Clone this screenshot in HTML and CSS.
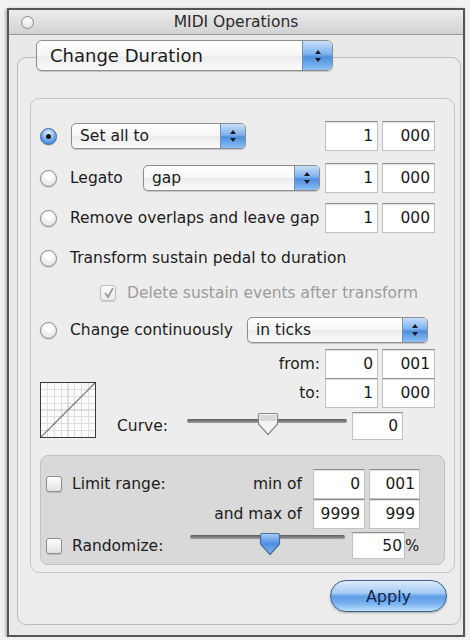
FILE: index.html
```html
<!DOCTYPE html>
<html>
<head>
<meta charset="utf-8">
<link rel="stylesheet" href="styles.css">
</head>
<body>
<div class="window">
  <div class="titlebar">
    <span class="close"></span>
    <span class="title">MIDI Operations</span>
    <span></span>
  </div>
  <div class="content">
    <div class="popup big">
      <span class="ptext">Change Duration</span>
      <span class="stepper"><svg width="8" height="14" viewBox="0 0 8 14"><path d="M4 1 L7 5 L1 5 Z M4 13 L7 9 L1 9 Z" fill="#1a1a1a"/></svg></span>
    </div>
    <div class="group">
      <div class="options">
        <div class="row r1">
          <span class="radio on"></span>
          <div class="popup set"><span class="ptext">Set all to</span><span class="stepper"><svg width="8" height="14" viewBox="0 0 8 14"><path d="M4 1 L7 5 L1 5 Z M4 13 L7 9 L1 9 Z" fill="#1a1a1a"/></svg></span></div>
          <div class="fields"><span class="field">1</span><span class="field">000</span></div>
        </div>
        <div class="row r2">
          <span class="radio"></span>
          <span class="label">Legato</span>
          <div class="popup gap"><span class="ptext">gap</span><span class="stepper"><svg width="8" height="14" viewBox="0 0 8 14"><path d="M4 1 L7 5 L1 5 Z M4 13 L7 9 L1 9 Z" fill="#1a1a1a"/></svg></span></div>
          <div class="fields near"><span class="field">1</span><span class="field">000</span></div>
        </div>
        <div class="row r3">
          <span class="radio"></span>
          <span class="label">Remove overlaps and leave gap</span>
          <div class="fields"><span class="field">1</span><span class="field">000</span></div>
        </div>
        <div class="row r4">
          <span class="radio"></span>
          <span class="label">Transform sustain pedal to duration</span>
        </div>
        <div class="row cbrow">
          <span class="checkbox disabled"><svg width="13" height="13" viewBox="0 0 13 13"><path d="M3 6 L6 10 L11 1" fill="none" stroke="#9a9a9a" stroke-width="1.8"/></svg></span>
          <span class="label dim">Delete sustain events after transform</span>
        </div>
        <div class="row r5">
          <span class="radio"></span>
          <span class="label">Change continuously</span>
          <div class="popup ticks"><span class="ptext">in ticks</span><span class="stepper"><svg width="8" height="14" viewBox="0 0 8 14"><path d="M4 1 L7 5 L1 5 Z M4 13 L7 9 L1 9 Z" fill="#1a1a1a"/></svg></span></div>
        </div>
        <div class="curve-area">
          <div class="graph">
            <svg width="54" height="54" viewBox="0 0 54 54">
              <rect width="54" height="54" fill="#fbfbfb"/>
              <g stroke="#dedede" stroke-width="1">
                <path d="M6.5 0V54M13.5 0V54M20.5 0V54M33.5 0V54M40.5 0V54M47.5 0V54M0 6.5H54M0 13.5H54M0 20.5H54M0 33.5H54M0 40.5H54M0 47.5H54"/>
              </g>
              <g stroke="#c4c4c4" stroke-width="1">
                <path d="M27 0V54M0 27H54"/>
              </g>
              <path d="M0 54 L54 0" stroke="#6a6a6a" stroke-width="1.2"/>
            </svg>
          </div>
          <div class="curve-right">
            <div class="row rng">
              <span class="label rlabel">from:</span>
              <div class="fields"><span class="field">0</span><span class="field">001</span></div>
            </div>
            <div class="row rng">
              <span class="label rlabel">to:</span>
              <div class="fields"><span class="field">1</span><span class="field">000</span></div>
            </div>
            <div class="row curve">
              <span class="label clabel">Curve:</span>
              <div class="slider"><span class="track"></span><span class="knob"><svg width="22" height="24" viewBox="0 0 22 24"><path d="M3 1.5 H19 Q20.5 1.5 20.5 3 V12 L11 22.5 L1.5 12 V3 Q1.5 1.5 3 1.5 Z" fill="#f4f4f4" stroke="#8a8a8a" stroke-width="1.2"/><path d="M3 3 H19 V9 H3 Z" fill="#d9d9d9"/></svg></span></div>
              <span class="field cfield">0</span>
            </div>
          </div>
        </div>
        <div class="limits">
          <div class="lrow l1">
            <span class="checkbox"></span>
            <span class="label">Limit range:</span>
            <span class="label right">min of</span>
            <div class="fields"><span class="field">0</span><span class="field">001</span></div>
          </div>
          <div class="lrow l2">
            <span class="label right">and max of</span>
            <div class="fields"><span class="field">9999</span><span class="field">999</span></div>
          </div>
          <div class="lrow l3">
            <span class="checkbox"></span>
            <span class="label rlab">Randomize:</span>
            <div class="slider rs"><span class="track"></span><span class="knob"><svg width="22" height="24" viewBox="0 0 22 24"><defs><linearGradient id="bk" x1="0" y1="0" x2="0" y2="1"><stop offset="0" stop-color="#a9cdf5"/><stop offset="0.5" stop-color="#4b8fe0"/><stop offset="1" stop-color="#86bdf2"/></linearGradient></defs><path d="M3 1.5 H19 Q20.5 1.5 20.5 3 V12 L11 22.5 L1.5 12 V3 Q1.5 1.5 3 1.5 Z" fill="url(#bk)" stroke="#4a6e9e" stroke-width="1.2"/></svg></span></div>
            <span class="field pfield">50</span><span class="pct">%</span>
          </div>
        </div>
      </div>
      <div class="actions"><button class="apply">Apply</button></div>
    </div>
  </div>
</div>
</body>
</html>
```

FILE: styles.css
```css
html, body {
  margin: 0;
  padding: 0;
  background: #f2f2f2;
}
body {
  font-family: "DejaVu Sans", "Verdana", sans-serif;
  font-size: 15.5px;
  color: #1c1c1c;
}
.window {
  margin: 8px 0 0 7px;
  width: 454px;
  border: 2px solid #555;
  background: #e9e9e9;
  box-shadow: -1px 1px 3px rgba(0,0,0,0.35);
}
.titlebar {
  height: 24px;
  border-bottom: 1px solid #9a9a9a;
  background: linear-gradient(#ececec, #d2d2d2);
  display: grid;
  grid-template-columns: 1fr auto 1fr;
  align-items: center;
}
.close {
  width: 11px;
  height: 11px;
  border-radius: 50%;
  border: 1px solid #8c8c8c;
  background: radial-gradient(circle at 50% 35%, #ffffff, #d8d8d8);
  margin-left: 12px;
}
.title {
  font-size: 15.5px;
  color: #2a2a2a;
}
.content {
  padding: 5px 2px 10px 8px;
}
.popup {
  display: flex;
  align-items: stretch;
  height: 26px;
  box-sizing: border-box;
  border: 1px solid #8e8e8e;
  border-radius: 5px;
  background: linear-gradient(#ffffff, #f6f6f6 50%, #ececec 51%, #fafafa);
  box-shadow: 0 1px 1px rgba(0,0,0,0.18);
  overflow: hidden;
}
.ptext {
  flex: 1;
  display: flex;
  align-items: center;
  padding-left: 8px;
  white-space: nowrap;
}
.stepper {
  width: 24px;
  display: flex;
  align-items: center;
  justify-content: center;
  border-left: 1px solid #6a8fc2;
  background: linear-gradient(#c6dff9, #7fb2ee 45%, #4d8ee0 55%, #8cc0f3);
}
.popup.big {
  width: 297px;
  height: 31px;
  margin-left: 19px;
  position: relative;
  z-index: 1;
  font-size: 18px;
  border-radius: 6px;
}
.popup.big .ptext { padding-left: 13px; }
.popup.big .stepper { width: 29px; }
.group {
  margin-top: -14px;
  border: 1px solid #bcbcbc;
  border-radius: 9px;
  background: #ececec;
  padding: 40px 5px 12px 12px;
}
.options {
  border: 1px solid #c6c6c6;
  border-radius: 9px;
  background: #ededed;
  padding: 0 9px 7px 9px;
}
.row {
  display: flex;
  align-items: center;
  padding-right: 10px;
}
.radio {
  flex: none;
  width: 15px;
  height: 15px;
  border-radius: 50%;
  border: 1px solid #8a8a8a;
  background: radial-gradient(circle at 50% 30%, #ffffff 20%, #dcdcdc 90%);
  box-shadow: 0 1px 1px rgba(0,0,0,0.15);
  position: relative;
}
.radio.on {
  border-color: #3c66a0;
  background: radial-gradient(circle at 50% 30%, #d3e6fb 10%, #5d9be4 65%, #3b7fd4);
}
.radio.on::after {
  content: "";
  position: absolute;
  left: 5px;
  top: 5px;
  width: 5px;
  height: 5px;
  border-radius: 50%;
  background: #111;
}
.label {
  white-space: nowrap;
  margin-left: 13px;
}
.fields {
  display: flex;
  gap: 4px;
  margin-left: auto;
}
.field {
  box-sizing: border-box;
  width: 53px;
  height: 30px;
  background: #fff;
  border: 1px solid #c2c2c2;
  border-top-color: #8e8e8e;
  box-shadow: inset 0 1px 1px rgba(0,0,0,0.12);
  display: flex;
  align-items: center;
  justify-content: flex-end;
  padding-right: 4px;
  color: #1a1a1a;
}
.r1 { margin-top: 22px; height: 30px; }
.popup.set { width: 175px; margin-left: 14px; }
.r2 { margin-top: 12px; height: 30px; }
.popup.gap { width: 177px; margin-left: auto; }
.fields.near { margin-left: 5px; }
.r3 { margin-top: 10px; height: 30px; }
.r4 { margin-top: 10px; height: 30px; }
.cbrow { margin-top: 10px; height: 20px; padding-left: 60px; }
.checkbox {
  flex: none;
  box-sizing: border-box;
  width: 16px;
  height: 16px;
  border: 1px solid #8e8e8e;
  border-radius: 3px;
  background: linear-gradient(#ffffff, #e2e2e2);
  box-shadow: 0 1px 1px rgba(0,0,0,0.15);
  display: flex;
  align-items: center;
  justify-content: center;
}
.checkbox.disabled {
  border-color: #bdbdbd;
  background: linear-gradient(#fafafa, #ececec);
}
.label.dim { color: #9c9c9c; margin-left: 11px; }
.r5 { margin-top: 14px; height: 26px; }
.popup.ticks { width: 181px; margin-left: auto; margin-right: 7px; }
.curve-area {
  display: flex;
  align-items: flex-end;
  margin-top: 6px;
}
.graph {
  flex: none;
  width: 54px;
  height: 54px;
  border: 1px solid #3a3a3a;
  margin-bottom: 2px;
  line-height: 0;
}
.curve-right {
  flex: 1;
  display: flex;
  flex-direction: column;
}
.rng { height: 29px; }
.rng .rlabel { margin-left: auto; margin-right: 5px; }
.rng .fields { margin-left: 0; }
.row.curve { height: 28px; margin-top: 5px; }
.clabel { width: 70px; margin-left: 21px; flex: none; }
.curve .field { height: 28px; width: 51px; margin-left: 5px; }
.slider {
  position: relative;
  flex: none;
  width: 160px;
  height: 28px;
}
.track {
  position: absolute;
  left: 0;
  right: 0;
  top: 7px;
  height: 4px;
  border-radius: 2px;
  background: linear-gradient(#5a5a5a, #a0a0a0);
}
.knob {
  position: absolute;
  top: 0;
  left: 70px;
  line-height: 0;
}
.limits {
  margin-top: 15px;
  height: 110px;
  box-sizing: border-box;
  border: 1px solid #c2c2c2;
  border-radius: 8px;
  background: #d9d9d9;
  padding: 12px 24px 0 5px;
}
.lrow {
  display: flex;
  align-items: center;
}
.l1 { height: 31px; }
.l2 { height: 30px; }
.l3 { height: 27px; margin-top: 3px; }
.limits .label { margin-left: 10px; }
.limits .label.right { margin-left: auto; margin-right: 11px; }
.limits .fields { margin-left: 0; }
.l1 .fields .field:first-child, .l2 .fields .field:first-child { width: 52px; }
.l1 .field, .l2 .field { width: 51px; }
.rlab { width: 118px; flex: none; }
.slider.rs { width: 155px; height: 27px; }
.slider.rs .track { top: 3px; }
.slider.rs .knob { top: 0px; left: 69px; }
.pfield { width: 53px; height: 27px; margin-left: 7px; padding-right: 2px; }
.pct { width: 15px; font-size: 15px; }
.actions {
  display: flex;
  justify-content: flex-end;
  padding-top: 7px;
  padding-right: 8px;
}
.apply {
  width: 117px;
  height: 32px;
  border-radius: 16px;
  border: 1px solid #3f5f8c;
  background: linear-gradient(#dcebfc 0%, #a4cbf4 40%, #5e9de6 52%, #78b2ef 75%, #bfe0fc 100%);
  box-shadow: 0 1px 2px rgba(0,0,0,0.3);
  font-family: "DejaVu Sans", sans-serif;
  font-size: 16px;
  color: #16264f;
  padding: 0;
}
```
